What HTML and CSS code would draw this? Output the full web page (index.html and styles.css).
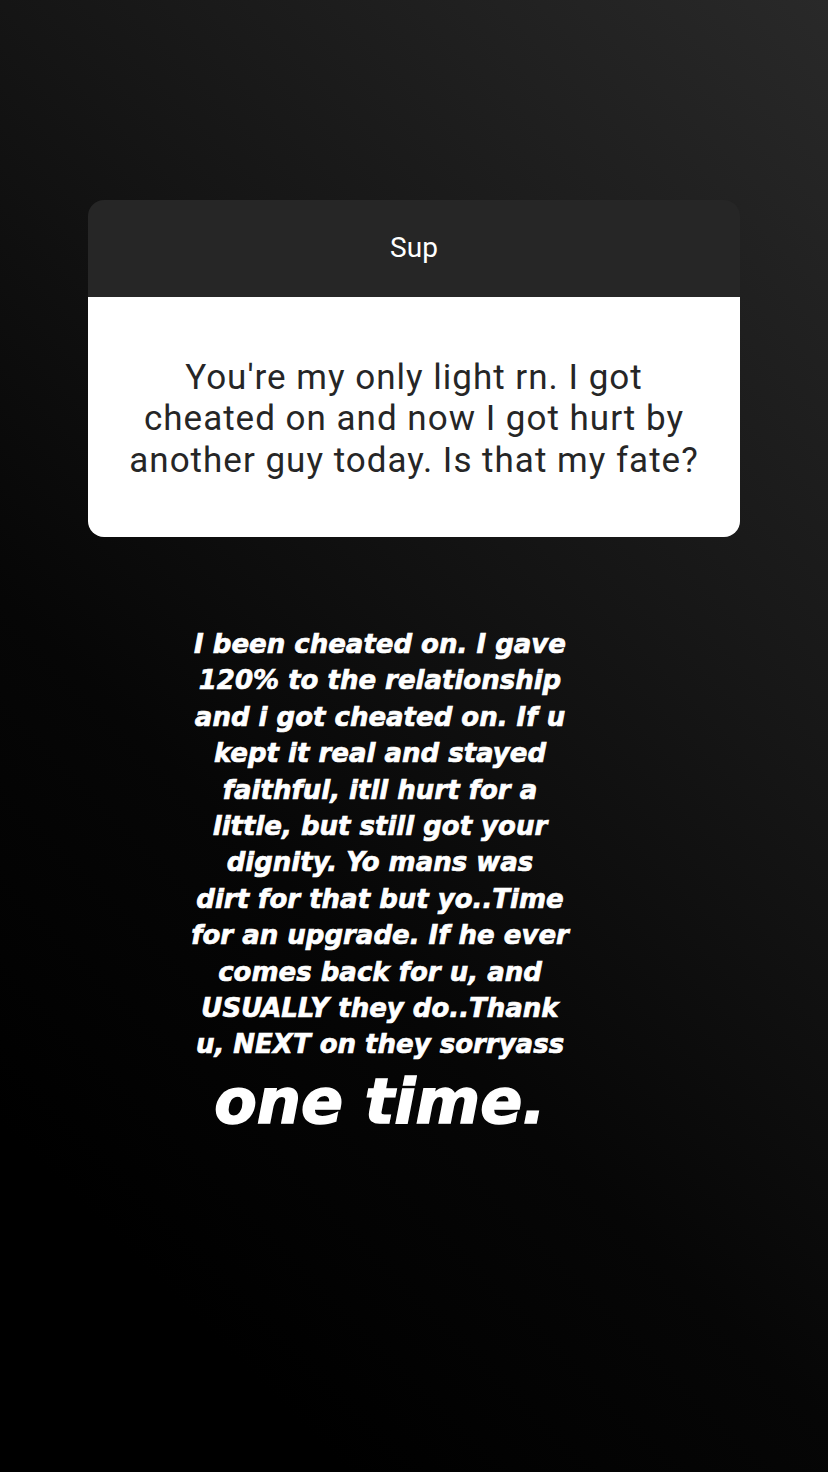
FILE: index.html
```html
<!DOCTYPE html>
<html lang="en">
<head>
  <meta charset="UTF-8">
  <meta name="viewport" content="width=device-width, initial-scale=1.0">
  <title>Story</title>
  <link rel="stylesheet" href="styles.css">
</head>
<body>

  <div class="story">
    <!-- Карточка вопроса -->
    <div class="question-card">
      <div class="question-head">Sup</div>
      <div class="question-body">
        <p>You're my only light rn. I got<br>cheated on and now I got hurt by<br>another guy today. Is that my fate?</p>
      </div>
    </div>

    <!-- Ответ -->
    <div class="answer">
      <p class="answer-text">I been cheated on. I gave<br>120% to the relationship<br>and i got cheated on. If u<br>kept it real and stayed<br>faithful, itll hurt for a<br>little, but still got your<br>dignity. Yo mans was<br>dirt for that but yo..Time<br>for an upgrade. If he ever<br>comes back for u, and<br>USUALLY they do..Thank<br>u, NEXT on they sorryass</p>
      <p class="answer-big">one time.</p>
    </div>
  </div>

</body>
</html>
```

FILE: styles.css
```css
* {
  box-sizing: border-box;
}
html, body {
  margin: 0;
  padding: 0;
}
body {
  width: 828px;
  height: 1472px;
  overflow: hidden;
  background: linear-gradient(225deg, #292929 0%, #151515 36%, #060606 62%, #000 85%);
  font-family: Roboto, "Liberation Sans", sans-serif;
}
.story {
  padding-top: 200px;
}
/* Карточка вопроса */
.question-card {
  width: 652px;
  margin-left: 88px;
  border-radius: 16px;
  overflow: hidden;
}
.question-head {
  height: 97px;
  background-color: #262626;
  color: #fff;
  font-size: 28px;
  display: flex;
  align-items: center;
  justify-content: center;
  padding-bottom: 2px;
}
.question-body {
  height: 240px;
  background-color: #fff;
  display: flex;
  align-items: center;
  justify-content: center;
}
.question-body p {
  margin: 0;
  color: #262626;
  font-size: 35px;
  letter-spacing: 1px;
  line-height: 41.5px;
  text-align: center;
  white-space: nowrap;
  padding-top: 4px;
}
/* Текст ответа */
.answer {
  width: 440px;
  margin-left: 160px;
  margin-top: 89px;
  text-align: center;
  color: #fff;
  font-family: "DejaVu Sans", sans-serif;
  font-style: italic;
  font-weight: bold;
  -webkit-text-stroke: 0.7px #fff;
}
.answer-text {
  margin: 0;
  font-size: 26px;
  line-height: 36.4px;
  white-space: nowrap;
}
.answer-big {
  margin: 4px 0 0;
  font-size: 62px;
  line-height: 70px;
  white-space: nowrap;
  -webkit-text-stroke: 1.5px #fff;
}
```
